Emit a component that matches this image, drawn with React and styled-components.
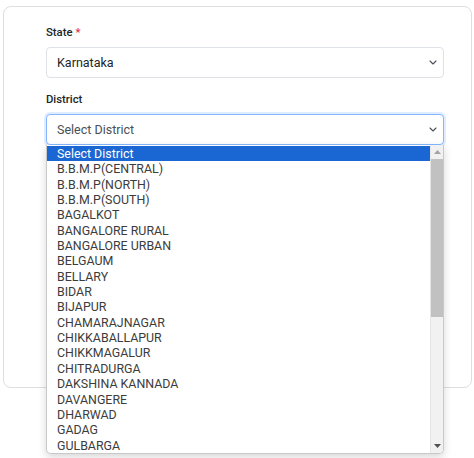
import React from "react";
import styled, { createGlobalStyle } from "styled-components";

const Global = createGlobalStyle`
  html, body { margin: 0; padding: 0; background: #ffffff; }
  body { font-family: Roboto, "Liberation Sans", Arial, sans-serif; color: #212529; }
  * { box-sizing: border-box; }
`;

const Page = styled.div`
  width: 474px;
  height: 458px;
  padding: 6px 2px 0 3px;
  overflow: hidden;
`;

const Card = styled.div`
  height: 382px;
  border: 1px solid #dedede;
  border-radius: 8px;
  padding: 19px 27px 0 42px;
  display: flex;
  flex-direction: column;
`;

const Field = styled.div`
  position: relative;
  display: flex;
  flex-direction: column;
  margin-bottom: ${(p) => p.$gap || 0}px;
`;

const Label = styled.label`
  font-size: 11.3px;
  line-height: 13px;
  font-weight: 500;
  color: #212529;
  margin-bottom: 8px;
`;

const Required = styled.span`
  color: #dc3545;
  margin-left: 3px;
`;

const SelectBox = styled.div`
  height: 31px;
  display: flex;
  align-items: center;
  justify-content: space-between;
  padding: 0 6px 0 10px;
  font-size: 12.5px;
  color: #212529;
  background: #fff;
  border: 1px solid ${(p) => (p.$focused ? "#86b7fe" : "#dee2e6")};
  border-radius: 4px;
  box-shadow: ${(p) => (p.$focused ? "0 0 0 2px rgba(13,110,253,0.13)" : "none")};
`;

const Value = styled.span`
  color: ${(p) => (p.$placeholder ? "#495057" : "#212529")};
`;

const Chevron = () => (
  <svg width="8" height="5" viewBox="0 0 8 5">
    <polyline points="1,1 4,4 7,1" fill="none" stroke="#495057" strokeWidth="1.1" strokeLinecap="round" strokeLinejoin="round" />
  </svg>
);

const Dropdown = styled.div`
  position: absolute;
  top: 100%;
  left: 0;
  right: 0;
  height: 309px;
  display: flex;
  background: #fff;
  border: 1px solid #c9c9c9;
  border-top: none;
  border-radius: 0 0 5px 5px;
  box-shadow: 0 3px 8px rgba(0, 0, 0, 0.16);
  overflow: hidden;
`;

const List = styled.ul`
  flex: 1;
  list-style: none;
  margin: 0;
  padding: 1px 0 0;
`;

const Option = styled.li`
  height: 15.35px;
  line-height: 15.35px;
  padding-left: 10px;
  font-size: 12.4px;
  white-space: nowrap;
  color: ${(p) => (p.$selected ? "#ffffff" : "#3c3c3c")};
  background: ${(p) => (p.$selected ? "#1a66d2" : "transparent")};
`;

const Scrollbar = styled.div`
  width: 13px;
  display: flex;
  flex-direction: column;
  align-items: center;
  background: #f1f1f1;
  border-left: 1px solid #e6e6e6;
`;

const ArrowCell = styled.div`
  height: 14px;
  width: 100%;
  display: flex;
  align-items: center;
  justify-content: center;
`;

const Track = styled.div`
  flex: 1;
  width: 100%;
  display: flex;
  flex-direction: column;
`;

const Thumb = styled.div`
  width: 100%;
  background: #c1c1c1;
`;

const Triangle = ({ up, color }) => (
  <svg width="7" height="4" viewBox="0 0 7 4">
    <polygon points={up ? "0,4 7,4 3.5,0" : "0,0 7,0 3.5,4"} fill={color} />
  </svg>
);

const districts = [
  "Select District",
  "B.B.M.P(CENTRAL)",
  "B.B.M.P(NORTH)",
  "B.B.M.P(SOUTH)",
  "BAGALKOT",
  "BANGALORE RURAL",
  "BANGALORE URBAN",
  "BELGAUM",
  "BELLARY",
  "BIDAR",
  "BIJAPUR",
  "CHAMARAJNAGAR",
  "CHIKKABALLAPUR",
  "CHIKKMAGALUR",
  "CHITRADURGA",
  "DAKSHINA KANNADA",
  "DAVANGERE",
  "DHARWAD",
  "GADAG",
  "GULBARGA",
];

export default function App() {
  return (
    <>
      <Global />
      <Page>
        <Card>
          <Field $gap={15}>
            <Label>
              State<Required>*</Required>
            </Label>
            <SelectBox>
              <Value>Karnataka</Value>
              <Chevron />
            </SelectBox>
          </Field>
          <Field>
            <Label>District</Label>
            <SelectBox $focused>
              <Value $placeholder>Select District</Value>
              <Chevron />
            </SelectBox>
            <Dropdown>
              <List>
                {districts.map((d, i) => (
                  <Option key={d} $selected={i === 0}>
                    {d}
                  </Option>
                ))}
              </List>
              <Scrollbar>
                <ArrowCell>
                  <Triangle up color="#a3a3a3" />
                </ArrowCell>
                <Track>
                  <Thumb style={{ height: "158px" }} />
                </Track>
                <ArrowCell>
                  <Triangle color="#505050" />
                </ArrowCell>
              </Scrollbar>
            </Dropdown>
          </Field>
        </Card>
      </Page>
    </>
  );
}
